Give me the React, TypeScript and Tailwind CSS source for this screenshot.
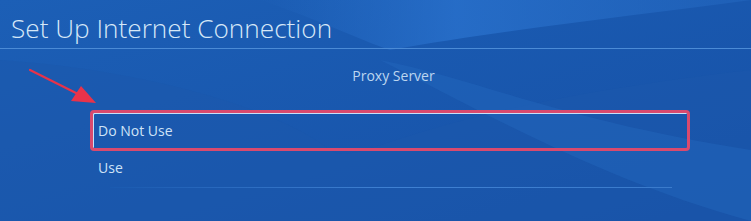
import React from "react";

export default function App() {
  return (
    <div className="relative w-[751px] h-[221px] overflow-hidden bg-[#1a5ab0]" style={{ fontFamily: '"Open Sans", "Noto Sans", sans-serif' }}>
      <svg className="absolute inset-0" width="751" height="221" viewBox="0 0 751 221">
        <defs>
          <linearGradient id="g1" x1="0" y1="0" x2="1" y2="1">
            <stop offset="0" stopColor="#1c5fb6" />
            <stop offset="1" stopColor="#1650a6" />
          </linearGradient>
          <linearGradient id="g2" x1="0" y1="0" x2="1" y2="0">
            <stop offset="0" stopColor="#2a72cc" stopOpacity="0" />
            <stop offset="0.4" stopColor="#2b74d0" stopOpacity="0.7" />
            <stop offset="1" stopColor="#2468c0" stopOpacity="0.5" />
          </linearGradient>
        </defs>
        <rect width="751" height="221" fill="url(#g1)" />
        <path d="M260 0 C 320 20, 360 40, 390 50 C 500 30, 640 15, 751 0 Z" fill="url(#g2)" />
        <path d="M0 60 C 150 70, 280 110, 330 150 C 360 170, 400 110, 751 70 L751 221 L0 221 Z" fill="#1b58ac" opacity="0.5" />
        <path d="M380 60 C 480 80, 560 120, 751 150 L751 221 C 600 180, 480 110, 380 60 Z" fill="#2165bc" opacity="0.5" />
      </svg>

      <div className="relative flex flex-col">
        <div className="h-[49px] flex items-end pl-[11px] pb-[7px] border-b border-[#4b8bd6]">
          <span className="text-[26.2px] leading-none font-light text-[#d6e8f8]">Set Up Internet Connection</span>
        </div>
        <div className="h-[61px] flex justify-center pt-[20px] pl-[36px]">
          <span className="text-[14px] leading-none text-[#bcd6f0]">Proxy Server</span>
        </div>
        <div className="ml-[90px] w-[600px] h-[41px] rounded-[4px] border-[3px] border-[#d94a6e] flex items-center pl-[5px] shadow-[inset_1px_1px_0_#c8e0f8]">
          <span className="text-[14px] leading-none text-[#cfe3f7]">Do Not Use</span>
        </div>
        <div className="ml-[98px] h-[34px] flex items-center">
          <span className="text-[14px] leading-none text-[#cfe3f7]">Use</span>
        </div>
        <div className="mt-[2px] ml-[110px] w-[562px] h-px bg-gradient-to-r from-[#1a5ab0] via-[#3f80d2] to-[#3a7bcc]" />
      </div>

      <svg className="absolute left-0 top-0" width="120" height="120" viewBox="0 0 120 120">
        <line x1="30" y1="70" x2="80" y2="95" stroke="#e8334a" strokeWidth="2.2" strokeLinecap="round" />
        <polygon points="96,103 71,101 81,86" fill="#e8334a" />
      </svg>
    </div>
  );
}
